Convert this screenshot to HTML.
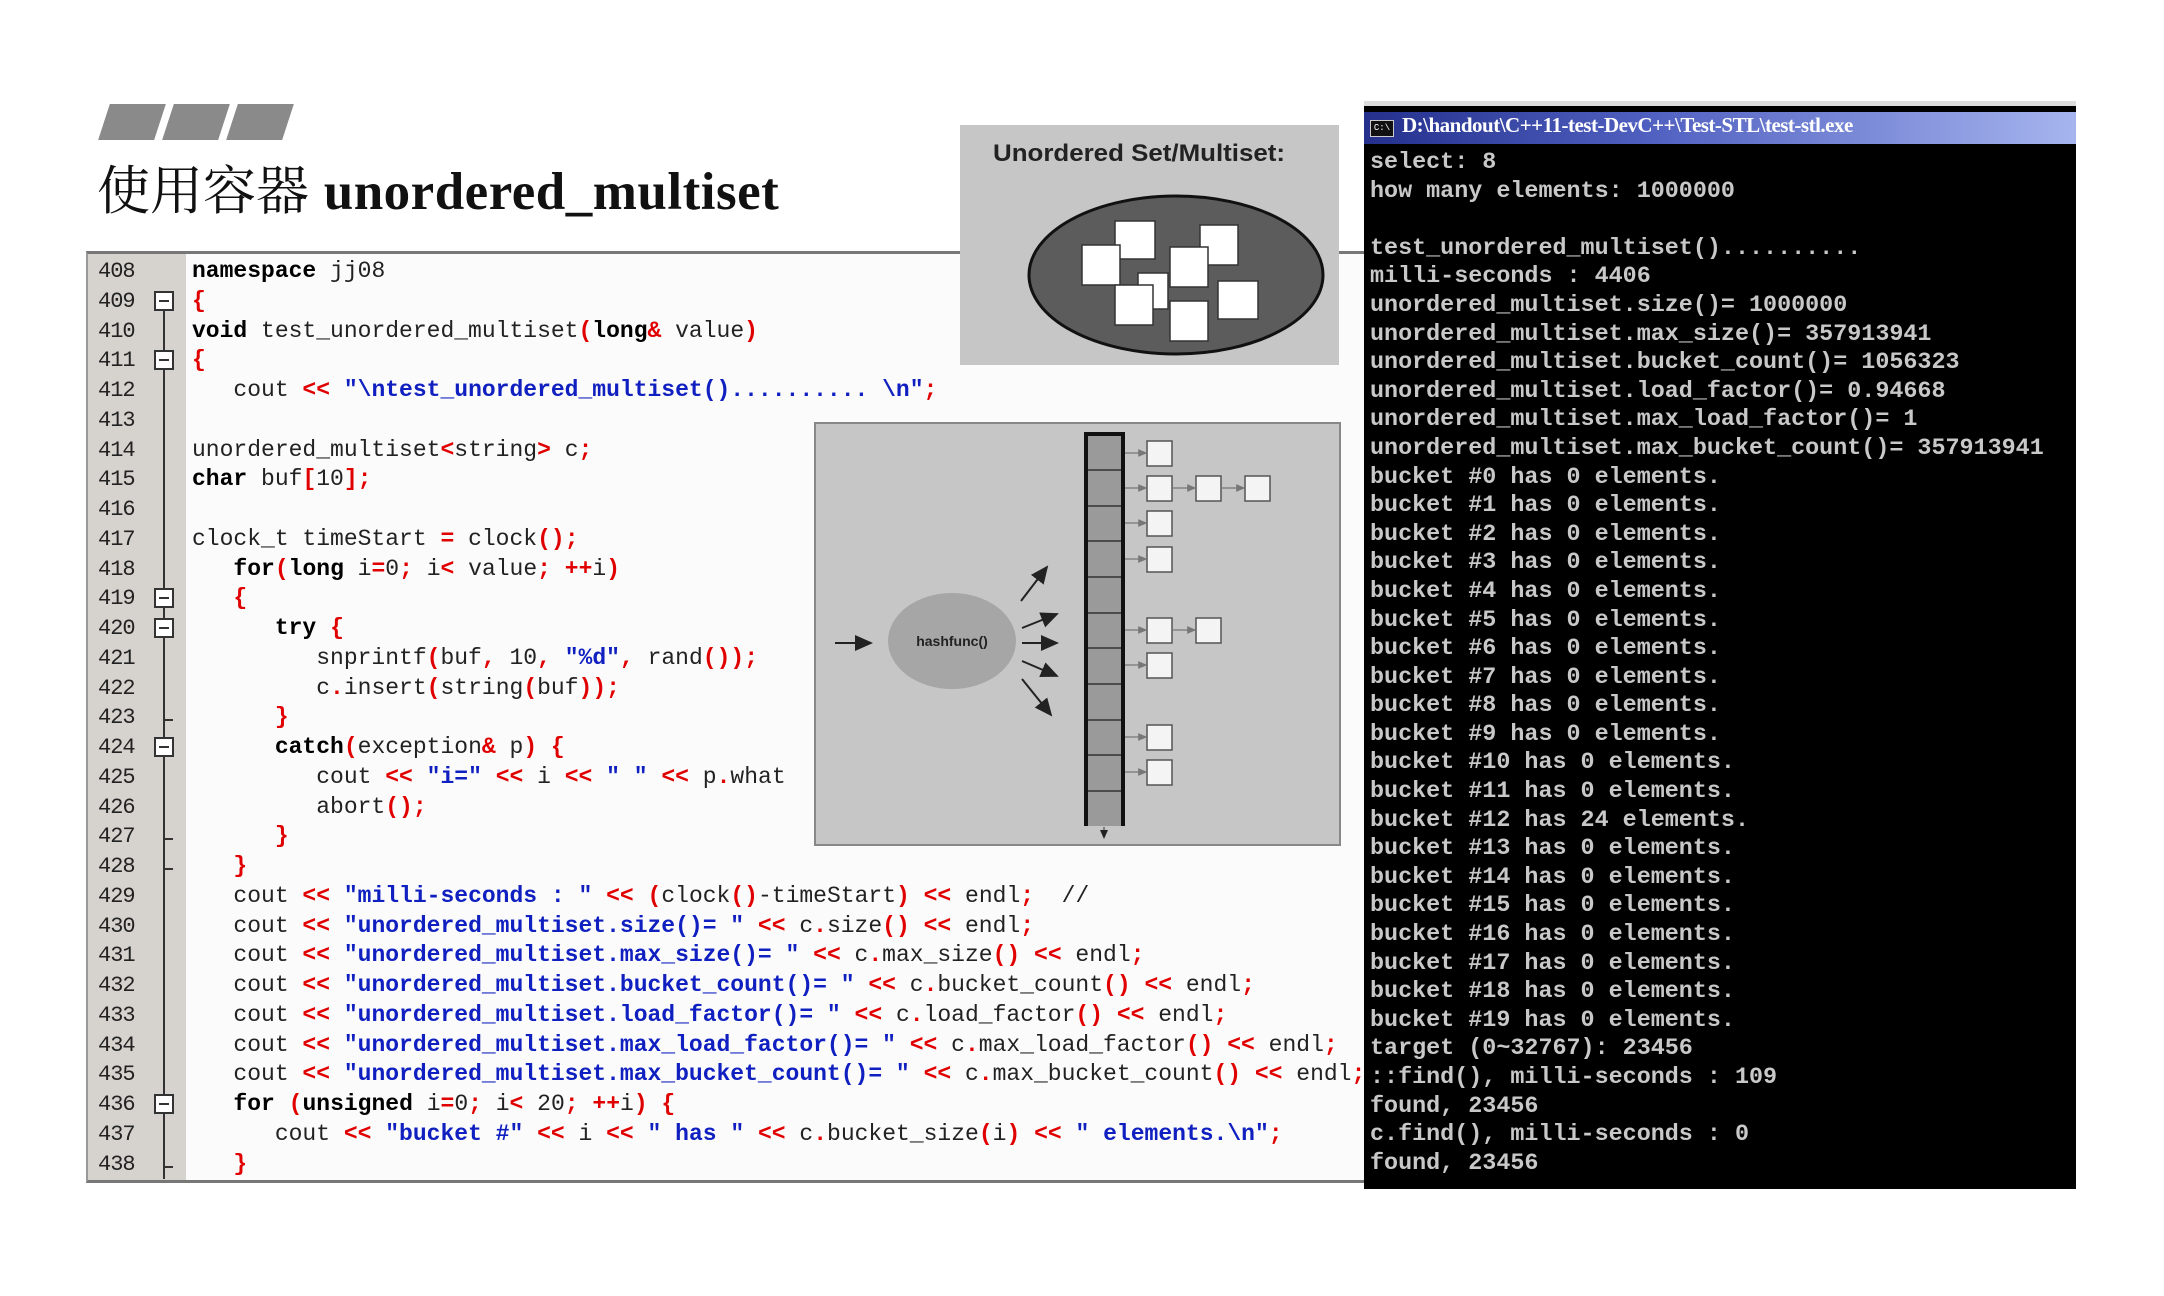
<!DOCTYPE html>
<html><head><meta charset="utf-8"><style>
*{margin:0;padding:0;box-sizing:border-box}
body{width:2164px;height:1296px;background:#fff;position:relative;overflow:hidden;font-family:"Liberation Sans",sans-serif}
.bar{position:absolute;top:104px;height:36px;width:56px;background:#8a8a8a;transform:skewX(-18deg)}
#title{position:absolute;left:97px;top:152px;font-size:53px;line-height:70px;color:#111;white-space:nowrap}
#title .cn{font-family:"Noto Serif CJK SC",serif;font-weight:400}
#title .en{font-family:"Liberation Serif",serif;font-weight:bold;letter-spacing:0.5px}
#code{position:absolute;left:86px;top:251px;width:1280px;height:932px;background:#fbfbfb;border-top:3px solid #777;border-bottom:3px solid #777;border-left:2px solid #999;overflow:hidden}
#gut{position:absolute;left:0;top:0;width:98px;height:100%;background:#d6d3ce}
#vline{position:absolute;left:75px;top:55px;width:2px;height:870px;background:#333}
.ln{position:absolute;left:10px;font-family:"Liberation Mono",monospace;font-size:22px;color:#222;letter-spacing:-1px}
.fold{position:absolute;left:66px;width:20px;height:20px;border:2px solid #333;background:#fff}
.fold:after{content:"";position:absolute;left:3px;top:7px;width:10px;height:2px;background:#333}
.tick{position:absolute;left:76px;width:9px;height:2px;background:#333}
.cl{position:absolute;left:104px;font-family:"Liberation Mono",monospace;font-size:23px;color:#222;white-space:pre}
.k{font-weight:bold;color:#000}
.r{color:#e00000;font-weight:bold}
.s{color:#1020c0;font-weight:bold}
#set{position:absolute;left:960px;top:125px;width:379px;height:240px;background:#c6c6c6}
#hash{position:absolute;left:814px;top:422px;width:527px;height:424px;background:#c6c6c6;border:2px solid #888}
#term{position:absolute;left:1366px;top:101px;width:719px;height:1088px;background:#000;border-top:5px solid #ddd}
#tbar{position:absolute;left:0;top:6px;width:100%;height:32px;background:linear-gradient(90deg,#24308c 0%,#5060c0 40%,#a6b4ee 100%)}
#tbar span{position:absolute;left:38px;top:1px;font-family:"Liberation Serif",serif;font-weight:bold;font-size:21px;color:#fff;letter-spacing:-0.5px;white-space:nowrap}
#ico{position:absolute;left:6px;top:8px;width:24px;height:17px;background:#111;border:1px solid #ccc;color:#fff;font-size:9px;line-height:15px;text-align:center;font-family:"Liberation Mono",monospace}
.tl{position:absolute;left:6px;font-family:"Liberation Mono",monospace;font-size:23.4px;font-weight:bold;color:#c8c8c8;white-space:pre;line-height:28.6px}
</style></head><body>
<div class="bar" style="left:104px"></div>
<div class="bar" style="left:168px"></div>
<div class="bar" style="left:232px"></div>
<div id="title"><span class="cn">使用容器</span> <span class="en">unordered_multiset</span></div>

<div id="code">
<div id="gut"></div>
<div id="vline"></div>
<div class="ln" style="top:5px">408</div><div class="ln" style="top:35px">409</div><div class="ln" style="top:65px">410</div><div class="ln" style="top:94px">411</div><div class="ln" style="top:124px">412</div><div class="ln" style="top:154px">413</div><div class="ln" style="top:184px">414</div><div class="ln" style="top:213px">415</div><div class="ln" style="top:243px">416</div><div class="ln" style="top:273px">417</div><div class="ln" style="top:303px">418</div><div class="ln" style="top:332px">419</div><div class="ln" style="top:362px">420</div><div class="ln" style="top:392px">421</div><div class="ln" style="top:422px">422</div><div class="ln" style="top:451px">423</div><div class="ln" style="top:481px">424</div><div class="ln" style="top:511px">425</div><div class="ln" style="top:541px">426</div><div class="ln" style="top:570px">427</div><div class="ln" style="top:600px">428</div><div class="ln" style="top:630px">429</div><div class="ln" style="top:660px">430</div><div class="ln" style="top:689px">431</div><div class="ln" style="top:719px">432</div><div class="ln" style="top:749px">433</div><div class="ln" style="top:779px">434</div><div class="ln" style="top:808px">435</div><div class="ln" style="top:838px">436</div><div class="ln" style="top:868px">437</div><div class="ln" style="top:898px">438</div>
<div class="fold" style="top:37px"></div><div class="fold" style="top:96px"></div><div class="fold" style="top:334px"></div><div class="fold" style="top:364px"></div><div class="fold" style="top:483px"></div><div class="fold" style="top:840px"></div>
<div class="tick" style="top:465px"></div><div class="tick" style="top:584px"></div><div class="tick" style="top:614px"></div><div class="tick" style="top:912px"></div>

<div class="cl" style="top:4px"><span class="k">namespace</span> jj08</div>
<div class="cl" style="top:34px"><span class="r">{</span></div>
<div class="cl" style="top:64px"><span class="k">void</span> test_unordered_multiset<span class="r">(</span><span class="k">long</span><span class="r">&amp;</span> value<span class="r">)</span></div>
<div class="cl" style="top:93px"><span class="r">{</span></div>
<div class="cl" style="top:123px">   cout <span class="r">&lt;&lt;</span> <span class="s">"\ntest_unordered_multiset().......... \n"</span><span class="r">;</span></div>
<div class="cl" style="top:183px">unordered_multiset<span class="r">&lt;</span>string<span class="r">&gt;</span> c<span class="r">;</span></div>
<div class="cl" style="top:212px"><span class="k">char</span> buf<span class="r">[</span>10<span class="r">];</span></div>
<div class="cl" style="top:272px">clock_t timeStart <span class="r">=</span> clock<span class="r">();</span></div>
<div class="cl" style="top:302px">   <span class="k">for</span><span class="r">(</span><span class="k">long</span> i<span class="r">=</span>0<span class="r">;</span> i<span class="r">&lt;</span> value<span class="r">;</span> <span class="r">++</span>i<span class="r">)</span></div>
<div class="cl" style="top:331px">   <span class="r">{</span></div>
<div class="cl" style="top:361px">      <span class="k">try</span> <span class="r">{</span></div>
<div class="cl" style="top:391px">         snprintf<span class="r">(</span>buf<span class="r">,</span> 10<span class="r">,</span> <span class="s">"%d"</span><span class="r">,</span> rand<span class="r">());</span></div>
<div class="cl" style="top:421px">         c<span class="r">.</span>insert<span class="r">(</span>string<span class="r">(</span>buf<span class="r">));</span></div>
<div class="cl" style="top:450px">      <span class="r">}</span></div>
<div class="cl" style="top:480px">      <span class="k">catch</span><span class="r">(</span>exception<span class="r">&amp;</span> p<span class="r">) {</span></div>
<div class="cl" style="top:510px">         cout <span class="r">&lt;&lt;</span> <span class="s">"i="</span> <span class="r">&lt;&lt;</span> i <span class="r">&lt;&lt;</span> <span class="s">" "</span> <span class="r">&lt;&lt;</span> p<span class="r">.</span>what</div>
<div class="cl" style="top:540px">         abort<span class="r">();</span></div>
<div class="cl" style="top:569px">      <span class="r">}</span></div>
<div class="cl" style="top:599px">   <span class="r">}</span></div>
<div class="cl" style="top:629px">   cout <span class="r">&lt;&lt;</span> <span class="s">"milli-seconds : "</span> <span class="r">&lt;&lt;</span> <span class="r">(</span>clock<span class="r">()</span>-timeStart<span class="r">)</span> <span class="r">&lt;&lt;</span> endl<span class="r">;</span>  //</div>
<div class="cl" style="top:659px">   cout <span class="r">&lt;&lt;</span> <span class="s">"unordered_multiset.size()= "</span> <span class="r">&lt;&lt;</span> c<span class="r">.</span>size<span class="r">()</span> <span class="r">&lt;&lt;</span> endl<span class="r">;</span></div>
<div class="cl" style="top:688px">   cout <span class="r">&lt;&lt;</span> <span class="s">"unordered_multiset.max_size()= "</span> <span class="r">&lt;&lt;</span> c<span class="r">.</span>max_size<span class="r">()</span> <span class="r">&lt;&lt;</span> endl<span class="r">;</span></div>
<div class="cl" style="top:718px">   cout <span class="r">&lt;&lt;</span> <span class="s">"unordered_multiset.bucket_count()= "</span> <span class="r">&lt;&lt;</span> c<span class="r">.</span>bucket_count<span class="r">()</span> <span class="r">&lt;&lt;</span> endl<span class="r">;</span></div>
<div class="cl" style="top:748px">   cout <span class="r">&lt;&lt;</span> <span class="s">"unordered_multiset.load_factor()= "</span> <span class="r">&lt;&lt;</span> c<span class="r">.</span>load_factor<span class="r">()</span> <span class="r">&lt;&lt;</span> endl<span class="r">;</span></div>
<div class="cl" style="top:778px">   cout <span class="r">&lt;&lt;</span> <span class="s">"unordered_multiset.max_load_factor()= "</span> <span class="r">&lt;&lt;</span> c<span class="r">.</span>max_load_factor<span class="r">()</span> <span class="r">&lt;&lt;</span> endl<span class="r">;</span></div>
<div class="cl" style="top:807px">   cout <span class="r">&lt;&lt;</span> <span class="s">"unordered_multiset.max_bucket_count()= "</span> <span class="r">&lt;&lt;</span> c<span class="r">.</span>max_bucket_count<span class="r">()</span> <span class="r">&lt;&lt;</span> endl<span class="r">;</span></div>
<div class="cl" style="top:837px">   <span class="k">for</span> <span class="r">(</span><span class="k">unsigned</span> i<span class="r">=</span>0<span class="r">;</span> i<span class="r">&lt;</span> 20<span class="r">;</span> <span class="r">++</span>i<span class="r">) {</span></div>
<div class="cl" style="top:867px">      cout <span class="r">&lt;&lt;</span> <span class="s">"bucket #"</span> <span class="r">&lt;&lt;</span> i <span class="r">&lt;&lt;</span> <span class="s">" has "</span> <span class="r">&lt;&lt;</span> c<span class="r">.</span>bucket_size<span class="r">(</span>i<span class="r">)</span> <span class="r">&lt;&lt;</span> <span class="s">" elements.\n"</span><span class="r">;</span></div>
<div class="cl" style="top:897px">   <span class="r">}</span></div>
</div>

<div id="set">
<svg width="379" height="240" viewBox="0 0 379 240">
<text x="179" y="36" text-anchor="middle" font-family="Liberation Sans" font-weight="bold" font-size="24" fill="#222" textLength="292" lengthAdjust="spacingAndGlyphs">Unordered Set/Multiset:</text>
<ellipse cx="216" cy="150" rx="147" ry="79" fill="#5c5c5c" stroke="#111" stroke-width="3"/>
<g fill="#fff" stroke="#333" stroke-width="1.5">
<rect x="155" y="96" width="40" height="38"/><rect x="240" y="100" width="38" height="40"/>
<rect x="122" y="120" width="38" height="40"/><rect x="210" y="122" width="38" height="40"/>
<rect x="178" y="148" width="30" height="36"/><rect x="258" y="156" width="40" height="38"/>
<rect x="155" y="160" width="38" height="40"/><rect x="210" y="176" width="38" height="40"/>
</g></svg>
</div>

<div id="hash">
<svg width="523" height="420" viewBox="0 0 523 420">
<defs><marker id="a" markerWidth="10" markerHeight="10" refX="8" refY="5" orient="auto"><path d="M0,1 L9,5 L0,9 Z" fill="#222"/></marker>
<marker id="b" markerWidth="8" markerHeight="8" refX="6" refY="4" orient="auto"><path d="M0,1 L7,4 L0,7 Z" fill="#777"/></marker></defs>
<rect x="270" y="10" width="37" height="392" fill="#9a9a9a"/>
<g stroke="#333" stroke-width="1.5">
<line x1="270" y1="46" x2="307" y2="46"/><line x1="270" y1="82" x2="307" y2="82"/><line x1="270" y1="117" x2="307" y2="117"/><line x1="270" y1="153" x2="307" y2="153"/><line x1="270" y1="189" x2="307" y2="189"/><line x1="270" y1="224" x2="307" y2="224"/><line x1="270" y1="260" x2="307" y2="260"/><line x1="270" y1="296" x2="307" y2="296"/><line x1="270" y1="331" x2="307" y2="331"/><line x1="270" y1="367" x2="307" y2="367"/>
</g>
<path d="M270,402 V10 H307 V402" fill="none" stroke="#111" stroke-width="4"/>
<line x1="288" y1="403" x2="288" y2="414" stroke="#333" marker-end="url(#a)"/>
<ellipse cx="136" cy="217" rx="64" ry="48" fill="#a6a6a6"/>
<text x="136" y="222" text-anchor="middle" font-family="Liberation Sans" font-weight="bold" font-size="14" fill="#222">hashfunc()</text>
<g stroke="#222" stroke-width="2" marker-end="url(#a)">
<line x1="19" y1="219" x2="55" y2="219"/>
<line x1="205" y1="177" x2="231" y2="143"/><line x1="206" y1="204" x2="241" y2="190"/><line x1="206" y1="219" x2="241" y2="219"/><line x1="206" y1="237" x2="241" y2="252"/><line x1="206" y1="255" x2="235" y2="291"/>
</g>
<g fill="#f4f4f4" stroke="#555" stroke-width="1.5">
<rect x="331" y="17" width="25" height="25"/><rect x="331" y="52" width="25" height="25"/><rect x="380" y="52" width="25" height="25"/><rect x="429" y="52" width="25" height="25"/>
<rect x="331" y="87" width="25" height="25"/><rect x="331" y="123" width="25" height="25"/>
<rect x="331" y="194" width="25" height="25"/><rect x="380" y="194" width="25" height="25"/>
<rect x="331" y="229" width="25" height="25"/><rect x="331" y="301" width="25" height="25"/><rect x="331" y="336" width="25" height="25"/>
</g>
<g stroke="#777" stroke-width="1.3" marker-end="url(#b)">
<line x1="309" y1="29" x2="330" y2="29"/><line x1="309" y1="64" x2="330" y2="64"/><line x1="357" y1="64" x2="379" y2="64"/><line x1="406" y1="64" x2="428" y2="64"/>
<line x1="309" y1="99" x2="330" y2="99"/><line x1="309" y1="135" x2="330" y2="135"/><line x1="309" y1="206" x2="330" y2="206"/><line x1="357" y1="206" x2="379" y2="206"/>
<line x1="309" y1="241" x2="330" y2="241"/><line x1="309" y1="313" x2="330" y2="313"/><line x1="309" y1="348" x2="330" y2="348"/>
</g></svg>
</div>

<div id="term" style="left:1364px;width:712px">
<div id="tbar"><div id="ico">C:\</div><span>D:\handout\C++11-test-DevC++\Test-STL\test-stl.exe</span></div>
<div class="tl" style="top:43px">select: 8
how many elements: 1000000

test_unordered_multiset()..........
milli-seconds : 4406
unordered_multiset.size()= 1000000
unordered_multiset.max_size()= 357913941
unordered_multiset.bucket_count()= 1056323
unordered_multiset.load_factor()= 0.94668
unordered_multiset.max_load_factor()= 1
unordered_multiset.max_bucket_count()= 357913941
bucket #0 has 0 elements.
bucket #1 has 0 elements.
bucket #2 has 0 elements.
bucket #3 has 0 elements.
bucket #4 has 0 elements.
bucket #5 has 0 elements.
bucket #6 has 0 elements.
bucket #7 has 0 elements.
bucket #8 has 0 elements.
bucket #9 has 0 elements.
bucket #10 has 0 elements.
bucket #11 has 0 elements.
bucket #12 has 24 elements.
bucket #13 has 0 elements.
bucket #14 has 0 elements.
bucket #15 has 0 elements.
bucket #16 has 0 elements.
bucket #17 has 0 elements.
bucket #18 has 0 elements.
bucket #19 has 0 elements.
target (0~32767): 23456
::find(), milli-seconds : 109
found, 23456
c.find(), milli-seconds : 0
found, 23456</div>
</div>
</body></html>
